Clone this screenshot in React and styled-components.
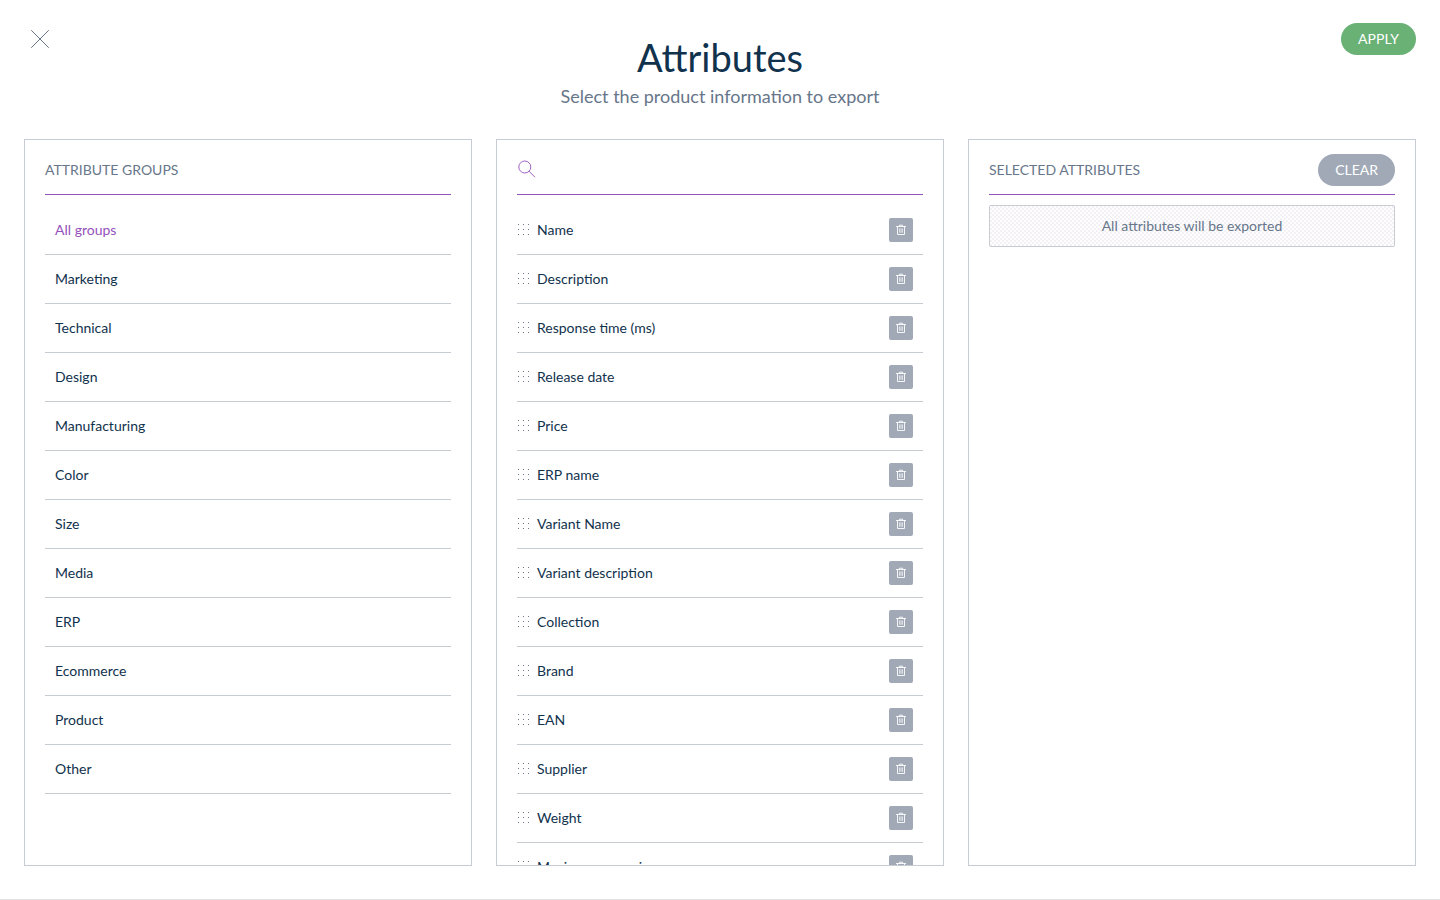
import React from "react";
import styled, { createGlobalStyle } from "styled-components";

const color = {
  navy: "#11324d",
  slate: "#67768a",
  grey: "#a1a9b7",
  line: "#c7cbd4",
  purple: "#9452ba",
  green: "#6ab175",
};

const GlobalStyle = createGlobalStyle`
  *, *::before, *::after { box-sizing: border-box; }
  body {
    margin: 0;
    background: #fff;
    color: ${color.navy};
    font: 400 14px/20px Lato, "Liberation Sans", sans-serif;
  }
  button, input { font: inherit; }
`;

const Page = styled.main`
  display: flex;
  flex-direction: column;
  height: 100vh;
  padding: 0 24px 33px;
  border-bottom: 1px solid #e0e0e0;
`;

const Header = styled.header`
  display: grid;
  grid-template-columns: 1fr auto 1fr;
  align-items: start;
  padding: 23px 0 29px;
`;

const CloseButton = styled.button`
  display: flex;
  justify-self: start;
  padding: 4px;
  border: 0;
  background: none;
  color: ${color.slate};
  cursor: pointer;
`;

const Heading = styled.div`
  padding-top: 9px;
  text-align: center;
`;

const Title = styled.h1`
  margin: 0;
  font-size: 38px;
  line-height: 50px;
  font-weight: 400;
`;

const Subtitle = styled.p`
  margin: 0;
  font-size: 18px;
  line-height: 28px;
  color: ${color.slate};
`;

const PillButton = styled.button`
  justify-self: end;
  height: 32px;
  padding: 0 17px;
  border: 0;
  border-radius: 16px;
  background: ${(p) => (p.$tone === "primary" ? color.green : color.grey)};
  color: #fff;
  text-transform: uppercase;
  cursor: pointer;
`;

const Columns = styled.div`
  flex: 1;
  min-height: 0;
  display: grid;
  grid-template-columns: repeat(3, minmax(0, 1fr));
  grid-template-rows: minmax(0, 1fr);
  gap: 24px;
`;

const Panel = styled.section`
  display: flex;
  flex-direction: column;
  overflow: hidden;
  padding: 5px 20px 0;
  border: 1px solid ${color.line};
`;

const PanelHeader = styled.div`
  flex: none;
  display: flex;
  align-items: center;
  justify-content: space-between;
  height: 50px;
  border-bottom: 1px solid ${color.purple};
`;

const PanelTitle = styled.h2`
  margin: 0;
  font-size: 14px;
  font-weight: 400;
  text-transform: uppercase;
  color: ${color.slate};
`;

const SearchLabel = styled.label`
  flex: 1;
  display: flex;
  align-items: center;
  gap: 8px;
  color: ${color.purple};
`;

const SearchInput = styled.input`
  flex: 1;
  min-width: 0;
  padding: 0;
  border: 0;
  outline: 0;
  background: none;
  color: ${color.navy};
`;

const List = styled.ul`
  flex: 1;
  min-height: 0;
  overflow: hidden auto;
  scrollbar-width: none;
  margin: 0;
  padding: 11px 0 0;
  list-style: none;
`;

const Row = styled.li`
  display: flex;
  align-items: center;
  height: 49px;
  border-bottom: 1px solid ${color.line};
`;

const GroupButton = styled.button`
  flex: 1;
  padding: 0 10px;
  border: 0;
  background: none;
  text-align: left;
  color: ${(p) => (p.$active ? color.purple : color.navy)};
  cursor: pointer;
`;

const AttributeRow = styled(Row)`
  gap: 7px;
  padding-right: 10px;
`;

const AttributeName = styled.span`
  flex: 1;
`;

const DeleteButton = styled.button`
  display: flex;
  align-items: center;
  justify-content: center;
  width: 24px;
  height: 24px;
  padding: 0;
  border: 0;
  border-radius: 2px;
  background: ${color.grey};
  color: #fff;
  cursor: pointer;
`;

const Notice = styled.p`
  margin: 10px 0 0;
  padding: 10px;
  border: 1px solid ${color.line};
  border-radius: 2px;
  background: repeating-conic-gradient(#f3f1f5 0 25%, #fefefe 0 50%) 0 0 / 4px 4px;
  text-align: center;
  color: ${color.slate};
`;

const CloseIcon = () => (
  <svg width="24" height="24" viewBox="0 0 24 24" fill="none" stroke="currentColor" aria-hidden="true">
    <path d="M3.5 3.5l17 17M20.5 3.5l-17 17" strokeLinecap="round" />
  </svg>
);

const SearchIcon = () => (
  <svg width="20" height="20" viewBox="0 0 20 20" fill="none" stroke="currentColor" aria-hidden="true">
    <circle cx="7.8" cy="7" r="6" strokeWidth="0.9" />
    <path d="M12.1 11.3l5.6 5.6" strokeWidth="0.9" strokeLinecap="round" />
  </svg>
);

const GripIcon = () => (
  <svg width="13" height="12" viewBox="0 0 13 12" fill={color.slate} shapeRendering="crispEdges" aria-hidden="true">
    {[0, 5, 10].map((y) => [1, 6, 11].map((x) => <rect key={`${x}-${y}`} x={x} y={y} width="1" height="1" />))}
  </svg>
);

const TrashIcon = () => (
  <svg width="12" height="12" viewBox="0 0 12 12" fill="none" stroke="currentColor" strokeWidth="0.9" aria-hidden="true">
    <path d="M1.4 2.5h9.2M4.4 2.4V1.2h3.2v1.2M2.5 2.6v7.9h7V2.6" strokeLinejoin="round" strokeLinecap="round" />
    <path d="M4.6 4.4v4.4M6 4.4v4.4M7.4 4.4v4.4" strokeWidth="0.7" />
  </svg>
);

const groups = [
  "All groups", "Marketing", "Technical", "Design", "Manufacturing", "Color",
  "Size", "Media", "ERP", "Ecommerce", "Product", "Other",
];

const attributes = [
  "Name", "Description", "Response time (ms)", "Release date", "Price", "ERP name",
  "Variant Name", "Variant description", "Collection", "Brand", "EAN", "Supplier",
  "Weight", "Maximum scan size",
];

export default function App() {
  return (
    <>
      <GlobalStyle />
      <Page>
        <Header>
          <CloseButton type="button" aria-label="Close"><CloseIcon /></CloseButton>
          <Heading>
            <Title>Attributes</Title>
            <Subtitle>Select the product information to export</Subtitle>
          </Heading>
          <PillButton type="button" $tone="primary">Apply</PillButton>
        </Header>
        <Columns>
          <Panel>
            <PanelHeader><PanelTitle>Attribute groups</PanelTitle></PanelHeader>
            <List>
              {groups.map((name, i) => (
                <Row key={name}>
                  <GroupButton type="button" $active={i === 0}>{name}</GroupButton>
                </Row>
              ))}
            </List>
          </Panel>
          <Panel>
            <PanelHeader>
              <SearchLabel>
                <SearchIcon />
                <SearchInput type="text" aria-label="Search attributes" />
              </SearchLabel>
            </PanelHeader>
            <List>
              {attributes.map((name) => (
                <AttributeRow key={name}>
                  <GripIcon />
                  <AttributeName>{name}</AttributeName>
                  <DeleteButton type="button" aria-label={`Remove ${name}`}><TrashIcon /></DeleteButton>
                </AttributeRow>
              ))}
            </List>
          </Panel>
          <Panel>
            <PanelHeader>
              <PanelTitle>Selected attributes</PanelTitle>
              <PillButton type="button">Clear</PillButton>
            </PanelHeader>
            <Notice>All attributes will be exported</Notice>
          </Panel>
        </Columns>
      </Page>
    </>
  );
}
